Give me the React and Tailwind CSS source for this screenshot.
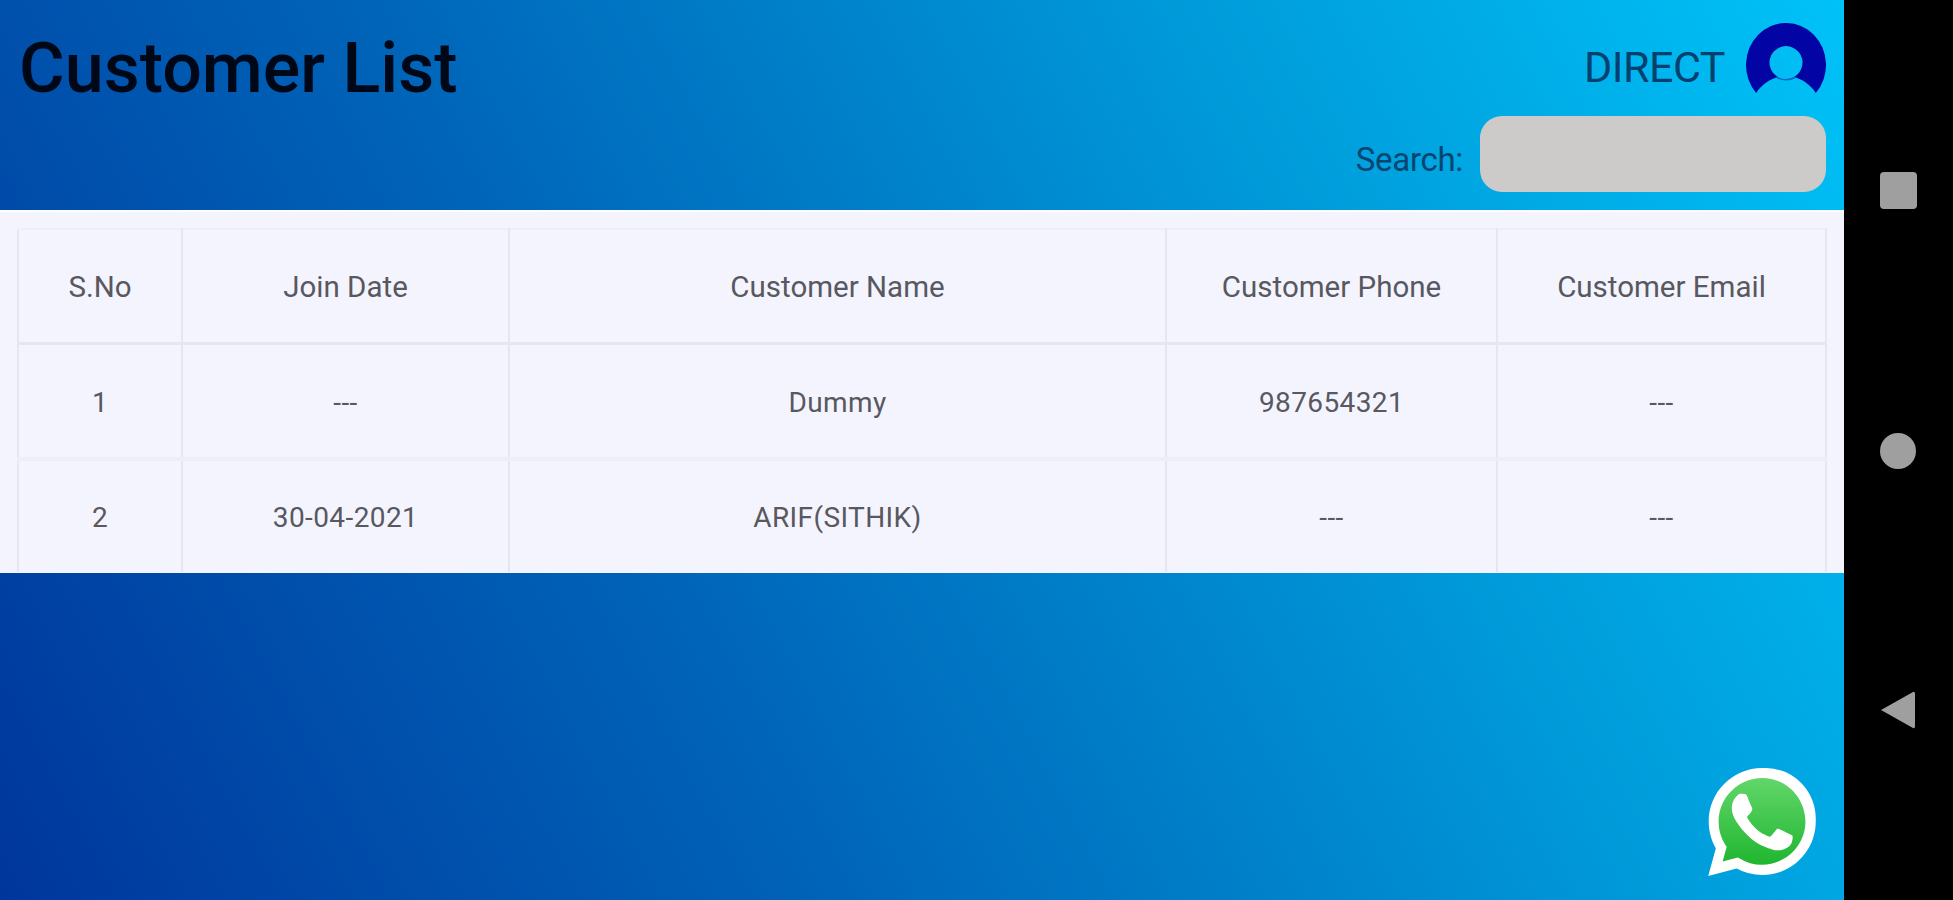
const headers = ["S.No", "Join Date", "Customer Name", "Customer Phone", "Customer Email"];
const rows = [
  ["1", "---", "Dummy", "987654321", "---"],
  ["2", "30-04-2021", "ARIF(SITHIK)", "---", "---"],
];
const colWidths = ["w-[164px]", "w-[327px]", "w-[657px]", "w-[331px]", "w-[329px]"];

function Avatar() {
  return (
    <svg width="80" height="72" viewBox="0 0 80 72" className="block">
      <path
        fillRule="evenodd"
        fill="#0204a4"
        d="M10.2 70 A40 42 0 1 1 69.8 70 C65 62 56 56 48 54 A16.5 16.5 0 1 0 32 54 C24 56 15 62 10.2 70 Z"
      />
      <path d="M31 54.5 Q40 59 49 54.5" fill="none" stroke="#0a62c4" strokeWidth="1.5" />
    </svg>
  );
}

function WhatsApp() {
  return (
    <svg width="108" height="108" viewBox="0 0 24 24" className="block">
      <defs>
        <linearGradient id="wa" x1="0" y1="0" x2="0" y2="1">
          <stop offset="0" stopColor="#62d66a" />
          <stop offset="1" stopColor="#20b630" />
        </linearGradient>
      </defs>
      <path fill="#fff" d="M12.05 0C5.495 0 .16 5.335.157 11.892c0 2.096.547 4.142 1.588 5.945L.057 24l6.305-1.654a11.882 11.882 0 005.683 1.448h.005c6.554 0 11.89-5.335 11.893-11.893A11.821 11.821 0 0020.885 3.488 11.821 11.821 0 0012.05 0z" />
      <path fill="url(#wa)" d="M12.05 2.2c-5.3 0-9.7 4.4-9.7 9.7 0 1.9.5 3.6 1.5 5.2l.3.4-.9 3.3 3.4-.9.4.2c1.5.9 3.1 1.4 4.9 1.4 5.4 0 9.7-4.3 9.7-9.6s-4.3-9.7-9.6-9.7z" />
      <g transform="translate(12 11.9) scale(1.12) translate(-12 -11.9)">
        <path fill="#fff" d="M17.472 14.382c-.297-.149-1.758-.867-2.03-.967-.273-.099-.471-.148-.67.15-.197.297-.767.966-.94 1.164-.173.199-.347.223-.644.075-.297-.15-1.255-.463-2.39-1.475-.883-.788-1.48-1.761-1.653-2.059-.173-.297-.018-.458.13-.606.134-.133.298-.347.446-.52.149-.174.198-.298.298-.497.099-.198.05-.371-.025-.52-.075-.149-.669-1.612-.916-2.207-.242-.579-.487-.5-.669-.51-.173-.008-.371-.01-.57-.01-.198 0-.52.074-.792.372-.272.297-1.04 1.016-1.04 2.479 0 1.462 1.065 2.875 1.213 3.074.149.198 2.096 3.2 5.077 4.487.709.306 1.262.489 1.694.625.712.227 1.36.195 1.871.118.571-.085 1.758-.719 2.006-1.413.248-.694.248-1.289.173-1.413-.074-.124-.272-.198-.57-.347z" />
      </g>
    </svg>
  );
}

export default function App() {
  return (
    <div className="flex h-[900px] w-[1953px] overflow-hidden bg-black font-['Roboto',sans-serif]">
      <main className="relative flex w-[1844px] flex-col bg-[linear-gradient(62deg,#00369c_0%,#0064b8_36%,#00a0dd_75%,#00c2f8_100%)]">
        <header className="flex h-[210px] items-start justify-between pl-[19px] pr-[18px]">
          <h1 className="mt-[32px] text-[70px] font-medium leading-[72px] text-[#000817]">Customer List</h1>
          <div className="flex flex-col items-end">
            <div className="mt-[23px] flex items-start">
              <span className="mr-[21px] mt-[22px] text-[43px] leading-[44px] tracking-[-0.5px] text-[#03406e]">DIRECT</span>
              <Avatar />
            </div>
            <div className="mt-[21px] flex items-center">
              <span className="mr-[17px] mt-[12px] text-[33px] leading-[38px] tracking-[-0.3px] text-[#06456f]">Search:</span>
              <div className="h-[76px] w-[346px] rounded-[22px] bg-[#cccbc9]" />
            </div>
          </div>
        </header>

        <section className="h-[363px] border-t-[2px] border-white bg-[#f4f4fe] pl-[17px] pt-[16px]">
          <table className="w-[1808px] table-fixed border-collapse text-center text-[#58585e]">
            <thead>
              <tr className="h-[114px] border-b-[3px] border-[#e6e6ee]">
                {headers.map((h, i) => (
                  <th key={h} className={`${colWidths[i]} border-x-[2px] border-t-[2px] border-x-[#e6e6ee] border-t-[#eeeef8] pt-[3px] text-[29.5px] font-normal`}>{h}</th>
                ))}
              </tr>
            </thead>
            <tbody>
              {rows.map((r, ri) => (
                <tr key={ri} className={ri === 0 ? "h-[116px] border-b-[4px] border-[#eeeef6]" : "h-[113px]"}>
                  {r.map((c, ci) => (
                    <td key={ci} className={`border-x-[2px] border-[#e6e6ee] text-[28px] tracking-[0.4px] ${ri === 0 ? "pt-[5px]" : "pt-[3px]"}`}>{c}</td>
                  ))}
                </tr>
              ))}
            </tbody>
          </table>
        </section>

        <div className="absolute left-[1708px] top-[768px]">
          <WhatsApp />
        </div>
      </main>

      <aside className="flex w-[109px] flex-col items-center pt-[172px]">
        <div className="ml-[-1px] h-[37px] w-[37px] rounded-[4px] bg-[#9f9f9f]" />
        <div className="ml-[-1px] mt-[224px] h-[36px] w-[36px] rounded-full bg-[#9f9f9f]" />
        <svg width="38" height="40" viewBox="0 0 38 40" className="mt-[221px] ml-[-2px]">
          <path d="M2 20 L34 2 Q36 1 36 4 L36 36 Q36 39 34 38 Z" fill="#9f9f9f" />
        </svg>
      </aside>
    </div>
  );
}
